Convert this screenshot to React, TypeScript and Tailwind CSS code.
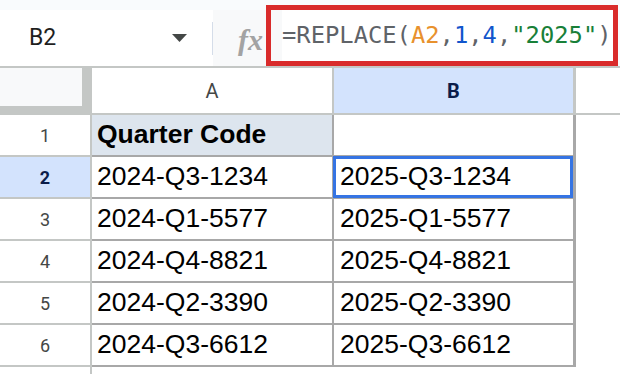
import { Fragment } from 'react'

const rows = [
  { a: '2024-Q3-1234', b: '2025-Q3-1234' },
  { a: '2024-Q1-5577', b: '2025-Q1-5577' },
  { a: '2024-Q4-8821', b: '2025-Q4-8821' },
  { a: '2024-Q2-3390', b: '2025-Q2-3390' },
  { a: '2024-Q3-6612', b: '2025-Q3-6612' },
]

function FormulaBar() {
  return (
    <div className="flex h-[66px] bg-[#f9fbfd]">
      <div className="mt-[10px] flex w-[213px] items-center bg-white pl-[29px]">
        <span className="font-['Roboto',sans-serif] text-[23px] text-[#1f1f1f]">B2</span>
        <svg className="ml-auto" width="15" height="8" viewBox="0 0 15 8">
          <path d="M0 0 L15 0 L7.5 8 Z" fill="#444746" />
        </svg>
        <div className="ml-[25px] h-[33px] w-px bg-[#d5dde9]" />
      </div>
      <div className="mt-[10px] flex w-[53px] items-center justify-end bg-[#f8f9fa] pr-[3px] pt-[2px]">
        <span className="font-['Liberation_Serif',serif] text-[30px] font-bold italic text-[#a3a3a3]">
          fx
        </span>
      </div>
      <div className="mt-[5px] flex w-[352px] border-[5px] border-[#d92b2b] bg-[#f8f9fa] pl-[11px]">
        <div className="flex flex-1 items-center bg-white font-['DejaVu_Sans_Mono',monospace] text-[23.8px] text-[#5f6368]">
          <span>=REPLACE(</span>
          <span className="text-[#e8912d]">A2</span>
          <span>,</span>
          <span className="text-[#1155cc]">1</span>
          <span>,</span>
          <span className="text-[#1155cc]">4</span>
          <span>,</span>
          <span className="text-[#188038]">"2025"</span>
          <span>)</span>
        </div>
      </div>
    </div>
  )
}

export default function App() {
  return (
    <div className="h-[374px] w-[620px] overflow-hidden bg-white font-['Liberation_Sans',Arial,sans-serif]">
      <FormulaBar />

      <div className="border-t-2 border-[#c4c7c5]">
        {/* column headers */}
        <div className="flex h-[47px]">
          <div className="w-[92px] bg-[#c4c7c5]">
            <div className="h-[38px] w-[82px] bg-[#f8f9fa]" />
          </div>
          <div className="flex w-[242px] items-center justify-center border-b-2 border-r-2 border-[#c4c7c5] font-['Roboto',sans-serif] text-[20px] text-[#444746]">
            A
          </div>
          <div className="flex w-[242px] items-center justify-center border-b-2 border-r-[3px] border-[#c4c7c5] bg-[#d3e3fd] font-['Roboto',sans-serif] text-[20px] font-bold text-[#0b1d4a]">
            B
          </div>
          <div className="flex-1 border-b-2 border-[#c4c7c5]" />
        </div>

        {/* row 1 */}
        <div className="flex h-[42px]">
          <div className="flex w-[92px] items-center justify-center border-b-2 border-r-2 border-[#c4c7c5] font-['Roboto',sans-serif] text-[18px] text-[#444746]">
            1
          </div>
          <div className="flex w-[242px] items-center border-b-2 border-r-2 border-[#a8a8a8] bg-[#dde5ee] pl-[5px] text-[26.5px] font-bold text-black">
            Quarter Code
          </div>
          <div className="w-[242px] border-b-2 border-r-[3px] border-[#a8a8a8]" />
          <div className="flex-1" />
        </div>

        {rows.map((r, i) => {
          const selected = i === 0
          return (
            <Fragment key={r.a}>
              <div className="flex h-[42px]">
                <div
                  className={
                    selected
                      ? "flex w-[92px] items-center justify-center border-b-2 border-r-2 border-[#c4c7c5] bg-[#d3e3fd] font-['Roboto',sans-serif] text-[18px] font-bold text-[#0b1d4a]"
                      : "flex w-[92px] items-center justify-center border-b-2 border-r-2 border-[#c4c7c5] font-['Roboto',sans-serif] text-[18px] text-[#444746]"
                  }
                >
                  {i + 2}
                </div>
                <div className="flex w-[242px] items-center border-b-2 border-r-2 border-[#a8a8a8] pl-[5px] text-[26.5px] text-black">
                  {r.a}
                </div>
                <div className="relative flex w-[242px] items-center border-b-2 border-r-[3px] border-[#a8a8a8] pl-[6px] text-[26.5px] text-black">
                  {r.b}
                  {selected && (
                    <div className="absolute -bottom-[1px] -left-[1px] -top-[1px] right-0 border-[3px] border-[#3574e3]" />
                  )}
                </div>
                <div className="flex-1" />
              </div>
            </Fragment>
          )
        })}

        {/* row 7 peeking */}
        <div className="flex h-[10px]">
          <div className="w-[92px] border-r-2 border-[#c4c7c5]" />
        </div>
      </div>
    </div>
  )
}
